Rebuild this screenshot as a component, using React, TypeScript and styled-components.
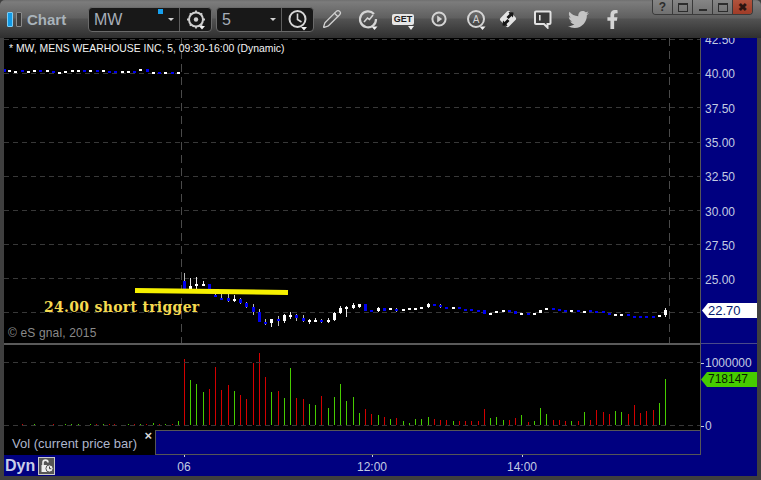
import React from "react";
import styled, { createGlobalStyle } from "styled-components";
import { FaFacebookF, FaTwitter } from "react-icons/fa";
import { Pencil } from "lucide-react";

const NAVY = "#000080";
const EDGE = "#565656";
const LABEL = "#c3cbe2";
const BAR_RED = "#d20000";
const BAR_GREEN = "#46cc00";

type Candle = [color: "w" | "b", bodyTop: number, bodyBottom: number, wickTop?: number, wickBottom?: number];

// values read off 3x crops, y = base + v / 3
const PRIOR_BASE = 55;
const prior: [number, Candle][] = [
  [12, ["b", 42, 50]], [28, ["w", 45, 50]], [46, ["w", 47, 53]], [67, ["b", 46, 52]], [85, ["w", 47, 53]],
  [103, ["w", 45, 50]], [121, ["b", 44, 50]], [142, ["w", 44, 50]], [160, ["b", 47, 53]], [178, ["w", 50, 55]],
  [196, ["w", 47, 53]], [217, ["w", 44, 50]], [235, ["w", 44, 50]], [253, ["b", 44, 50]], [271, ["w", 44, 50]],
  [292, ["b", 44, 50]], [310, ["w", 44, 50]], [328, ["b", 47, 53]], [346, ["b", 48, 53]], [367, ["w", 47, 53]],
  [385, ["w", 47, 53]], [403, ["b", 47, 53]], [421, ["w", 41, 47]], [442, ["b", 41, 51]], [460, ["w", 50, 56]],
  [478, ["b", 50, 56]], [496, ["w", 50, 56]], [517, ["b", 50, 56]], [535, ["w", 50, 56]],
];

const OPEN_BASE = 260;
const opening: Candle[] = [
  ["b", 63, 88, 39, 88], ["w", 78, 88, 55, 88], ["w", 72, 78, 50, 88], ["w", 72, 78, 63, 78], ["b", 72, 88],
  ["b", 104, 110, 100, 110], ["b", 113, 116, 103, 116], ["b", 114, 123, 100, 126], ["w", 116, 123, 105, 126],
  ["b", 118, 129, 113, 132], ["b", 129, 141, 126, 144], ["b", 141, 156, 132, 165], ["b", 156, 186, 147, 186],
  ["b", 186, 192, 177, 195], ["w", 177, 189, 177, 201], ["b", 177, 183, 168, 198], ["w", 165, 183, 162, 189],
  ["w", 165, 171, 156, 177], ["b", 165, 174, 162, 183], ["b", 174, 183, 165, 186], ["w", 180, 186, 177, 192],
  ["w", 180, 186, 174, 186], ["b", 180, 186, 177, 189], ["w", 180, 186, 174, 189], ["w", 159, 180, 156, 183],
  ["w", 144, 159, 138, 162], ["w", 141, 147, 138, 171],
];

const LATE_BASE = 285;
const afternoon: Candle[] = [
  ["w", 60, 68, 54, 72], ["w", 58, 66, 56, 68], ["b", 58, 78], ["b", 75, 81], ["w", 70, 78, 66, 81], ["b", 70, 78],
  ["w", 68, 75], ["b", 72, 78, 69, 81], ["w", 71, 78], ["w", 68, 75], ["w", 69, 75], ["w", 66, 72],
  ["w", 56, 66, 54, 69], ["b", 57, 63], ["b", 60, 66, 57, 69], ["b", 66, 72], ["w", 66, 72], ["b", 66, 72],
  ["b", 72, 78], ["b", 72, 78], ["b", 75, 81], ["b", 75, 87], ["w", 84, 90], ["w", 78, 84], ["w", 75, 81],
  ["b", 76, 81], ["b", 78, 87], ["w", 84, 90], ["b", 84, 90], ["w", 84, 90], ["w", 75, 84], ["w", 69, 75],
  ["b", 69, 75], ["b", 72, 78], ["b", 75, 81], ["w", 75, 81], ["b", 75, 81], ["w", 78, 84], ["b", 75, 81],
  ["b", 78, 84], ["b", 78, 84], ["b", 84, 90], ["w", 87, 93], ["w", 87, 93], ["b", 87, 93], ["b", 93, 99],
  ["b", 93, 99], ["b", 93, 99], ["b", 93, 99], ["w", 90, 96], ["w", 75, 90, 70, 96],
];

// top of each volume bar, 3x crop units (baseline 256)
const volumes: ["r" | "g", number][] = [
  ["r", 57], ["g", 120], ["g", 132], ["g", 155], ["r", 147], ["r", 81], ["r", 150], ["r", 135], ["g", 153], ["r", 165],
  ["r", 177], ["r", 68], ["r", 39], ["r", 111], ["g", 156], ["r", 153], ["g", 174], ["g", 84], ["r", 174], ["r", 177],
  ["g", 192], ["g", 195], ["r", 168], ["g", 204], ["g", 171], ["g", 132], ["g", 183], ["g", 171], ["g", 219], ["r", 207],
  ["r", 222], ["g", 225], ["r", 231], ["g", 237], ["r", 234], ["g", 243], ["g", 249], ["g", 237], ["g", 237], ["g", 231],
  ["r", 237], ["r", 240], ["r", 240], ["g", 243], ["r", 243], ["r", 243], ["r", 243], ["r", 243], ["r", 207], ["g", 234],
  ["g", 231], ["g", 240], ["r", 240], ["r", 234], ["g", 225], ["r", 246], ["g", 243], ["g", 204], ["g", 222], ["r", 240],
  ["r", 240], ["r", 243], ["g", 243], ["r", 243], ["g", 216], ["r", 240], ["r", 210], ["r", 216], ["r", 222], ["g", 213],
  ["g", 216], ["r", 222], ["r", 195], ["r", 219], ["r", 213], ["r", 210], ["g", 189], ["g", 117],
];

const priorVolumes: ["r" | "g", number][] = [
  ["r", 67], ["g", 103], ["r", 160], ["g", 196], ["g", 215], ["g", 235], ["g", 271], ["r", 290], ["g", 310],
  ["r", 328], ["r", 343], ["g", 385], ["r", 403], ["g", 421], ["r", 440], ["g", 460], ["r", 478], ["g", 497], ["r", 517], ["g", 535],
];

const gridY = [39, 73, 107, 142, 176, 210, 244, 278, 312];
const priceLabels = ["42.50", "40.00", "37.50", "35.00", "32.50", "30.00", "27.50", "25.00"];

const barX = (i: number) => Math.floor(184.3 + 6.25 * i);

const CandleMark = ({ x, base, candle }: { x: number; base: number; candle: Candle }) => {
  const [color, top, bottom, wickTop, wickBottom] = candle;
  const py = (v: number) => Math.round(base + v / 3);
  const fill = color === "w" ? "#ffffff" : "#0000f0";
  return (
    <g>
      {wickTop !== undefined && (
        <rect x={x} y={py(wickTop)} width={1} height={py(wickBottom ?? bottom) - py(wickTop)} fill={color === "w" ? "#e4e4e4" : "#b8b8b8"} />
      )}
      <rect x={x - 1} y={py(top)} width={3} height={Math.max(py(bottom) - py(top), 2)} fill={fill} />
    </g>
  );
};

const PriceChart = () => (
  <ChartSvg viewBox="4 38 696 305" width={696} height={305} shapeRendering="crispEdges">
    {gridY.map((y) => (
      <line key={y} x1={4} x2={700} y1={y + 0.5} y2={y + 0.5} stroke="#383838" strokeDasharray="5 4" />
    ))}
    <line x1={181.5} x2={181.5} y1={38} y2={343} stroke="#4a4a4a" strokeDasharray="8 5" />
    <line x1={669.5} x2={669.5} y1={38} y2={343} stroke="#4a4a4a" strokeDasharray="8 5" />
    {prior.map(([z, candle]) => (
      <CandleMark key={z} x={Math.floor(z / 3)} base={PRIOR_BASE} candle={candle} />
    ))}
    {opening.map((candle, i) => (
      <CandleMark key={i} x={barX(i)} base={OPEN_BASE} candle={candle} />
    ))}
    {afternoon.map((candle, i) => (
      <CandleMark key={i} x={barX(i + 27)} base={LATE_BASE} candle={candle} />
    ))}
    <line x1={135} y1={290.5} x2={288} y2={292.5} stroke="#f6f000" strokeWidth={5} shapeRendering="auto" />
  </ChartSvg>
);

const VolumeChart = () => (
  <ChartSvg viewBox="4 345 696 85" width={696} height={85} shapeRendering="crispEdges">
    {priorVolumes.map(([c, z], i) => {
      const tall = z === 535 ? 4 : z === 460 ? 2 : 1;
      return <rect key={i} x={Math.floor(z / 3)} y={425 - tall} width={1} height={tall} fill={c === "r" ? BAR_RED : BAR_GREEN} />;
    })}
    {volumes.map(([c, top], i) => {
      const y = Math.round(340 + top / 3);
      return <rect key={i} x={barX(i)} y={y} width={1} height={425 - y} fill={c === "r" ? BAR_RED : BAR_GREEN} />;
    })}
    <line x1={4} x2={700} y1={362.5} y2={362.5} stroke="#383838" strokeDasharray="5 4" />
    <line x1={4} x2={700} y1={425.5} y2={425.5} stroke="#383838" strokeDasharray="5 4" />
  </ChartSvg>
);

const Caret = ({ x, y }: { x: number; y: number }) => <path d={`M${x} ${y}h6l-3 3.5z`} fill="#f2f2f2" />;

const GearIcon = () => (
  <svg width="22" height="22" viewBox="0 0 22 22">
    <circle cx="11" cy="10.5" r="7" fill="none" stroke="#cfcfcf" strokeWidth="2" />
    <circle cx="11" cy="10.5" r="2.2" fill="#cfcfcf" />
    <path d="M11 1.5v2M11 17.5v2M2 10.5h2M18 10.5h2M4.8 4.3l1.4 1.4M15.8 15.3l1.4 1.4M17.2 4.3l-1.4 1.4M6.2 15.3l-1.4 1.4" stroke="#cfcfcf" strokeWidth="1.8" />
    <Caret x={14} y={17} />
  </svg>
);

const ClockIcon = () => (
  <svg width="24" height="24" viewBox="0 0 24 24">
    <circle cx="11.5" cy="11" r="8" fill="none" stroke="#d6d6d6" strokeWidth="2" />
    <path d="M11.5 5.5V11.5L15.5 14" fill="none" stroke="#d6d6d6" strokeWidth="1.6" />
    <Caret x={15} y={19} />
  </svg>
);

const GaugeIcon = () => (
  <svg width="24" height="24" viewBox="0 0 24 24">
    <path d="M18 7a8 8 0 1 0 2 5" fill="none" stroke="#d4d4d4" strokeWidth="2.2" />
    <path d="M8 15l3.5-4 2 1.5L17 8" fill="none" stroke="#d4d4d4" strokeWidth="1.6" />
    <Caret x={15.5} y={19.5} />
  </svg>
);

const PlayIcon = () => (
  <svg width="20" height="20" viewBox="0 0 20 20">
    <circle cx="10" cy="10" r="6.6" fill="none" stroke="#d4d4d4" strokeWidth="2" />
    <path d="M8.2 6.6l5 3.4-5 3.4z" fill="#d4d4d4" />
  </svg>
);

const AutoIcon = () => (
  <svg width="24" height="24" viewBox="0 0 24 24">
    <circle cx="12" cy="12" r="8" fill="none" stroke="#d4d4d4" strokeWidth="2" />
    <text x="12" y="15.5" textAnchor="middle" fontFamily="Liberation Sans, sans-serif" fontSize="10" fill="#d4d4d4">A</text>
    <Caret x={15.5} y={19.5} />
  </svg>
);

const SwapIcon = () => (
  <svg width="22" height="22" viewBox="0 0 22 22">
    <rect x="4.5" y="5" width="13" height="12" rx="2" transform="rotate(-45 11 11)" fill="#e4e4e4" />
    <path d="M11.5 4l5 .5-.5 5-1.5-1.5-3 3-2-2 3-3zM10.5 18l-5-.5.5-5 1.5 1.5 3-3 2 2-3 3z" fill="#161616" />
  </svg>
);

const ChatIcon = () => (
  <svg width="20" height="20" viewBox="0 0 20 20">
    <path d="M3 2.5h13.5a1 1 0 0 1 1 1V14a1 1 0 0 1-1 1h-2v3.5L11 15H3a1 1 0 0 1-1-1V3.5a1 1 0 0 1 1-1z" fill="#3a3a3a" stroke="#e2e2e2" strokeWidth="2" />
    <rect x="6" y="6" width="1.6" height="5.5" fill="#e2e2e2" />
  </svg>
);

const LockIcon = () => (
  <svg width="14" height="14" viewBox="0 0 14 14">
    <path d="M3 6V3.6a2.5 2.5 0 0 1 5 0" fill="none" stroke="#eee" strokeWidth="1.6" />
    <rect x="1.5" y="6" width="7" height="7" fill="#eee" />
    <circle cx="9.5" cy="9.5" r="3.6" fill="#eee" stroke="#555" />
    <path d="M9.5 7.5v2.2h1.8" fill="none" stroke="#444" />
  </svg>
);

const App = () => (
  <>
    <GlobalStyle />
    <Window>
      <Toolbar>
        <Brand>
          <BrandBar $active />
          <BrandBar />
          <BrandName>Chart</BrandName>
        </Brand>
        <FieldGroup $width={124}>
          <FieldValue>MW</FieldValue>
          <LinkDot />
          <FieldCaret />
          <FieldButton><GearIcon /></FieldButton>
        </FieldGroup>
        <FieldGroup $width={98}>
          <FieldValue>5</FieldValue>
          <FieldCaret />
          <FieldButton><ClockIcon /></FieldButton>
        </FieldGroup>
        <IconSlot $width={36}><Pencil size={20} color="#d0d0d0" strokeWidth={1.6} /></IconSlot>
        <IconSlot $width={36}><GaugeIcon /></IconSlot>
        <IconSlot $width={34}><GetBadge>GET</GetBadge></IconSlot>
        <IconSlot $width={37}><PlayIcon /></IconSlot>
        <IconSlot $width={37}><AutoIcon /></IconSlot>
        <IconSlot $width={28}><SwapIcon /></IconSlot>
        <IconSlot $width={42}><ChatIcon /></IconSlot>
        <IconSlot $width={28}><FaTwitter size={21} color="#c4c4c4" /></IconSlot>
        <IconSlot $width={40}><FaFacebookF size={19} color="#d4d4d4" /></IconSlot>
        <WindowControls>
          <ControlButton>?</ControlButton>
          <ControlButton><DockGlyph /></ControlButton>
          <ControlButton><MinGlyph /></ControlButton>
          <ControlButton><MaxGlyph /></ControlButton>
          <ControlButton $close>✖</ControlButton>
        </WindowControls>
      </Toolbar>
      <Body>
        <ChartColumn>
          <PricePane>
            <PriceChart />
            <StudyTitle>* MW, MENS WEARHOUSE INC, 5, 09:30-16:00 (Dynamic)</StudyTitle>
            <TriggerNote>24.00 short trigger</TriggerNote>
            <Copyright>© eS gnal, 2015</Copyright>
          </PricePane>
          <PaneRule />
          <VolumePane>
            <VolumeChart />
          </VolumePane>
          <LegendRow>
            <LegendLabel>
              Vol (current price bar)
              <LegendClose>×</LegendClose>
            </LegendLabel>
            <LegendFill />
          </LegendRow>
        </ChartColumn>
        <AxisColumn>
          <PriceAxis>
            {priceLabels.map((label) => (
              <PriceLabel key={label}>{label}</PriceLabel>
            ))}
            <LastPriceTag>22.70</LastPriceTag>
          </PriceAxis>
          <VolumeAxis>
            <VolumeLabel>1000000</VolumeLabel>
            <VolumeLabel>0</VolumeLabel>
            <LastVolumeTag>718147</LastVolumeTag>
          </VolumeAxis>
        </AxisColumn>
      </Body>
      <TimeAxis>
        <DynBlock>
          <DynText>Dyn</DynText>
          <LockBox><LockIcon /></LockBox>
        </DynBlock>
        <TimeLabel>06</TimeLabel>
        <span />
        <TimeLabel>12:00</TimeLabel>
        <span />
        <TimeLabel>14:00</TimeLabel>
      </TimeAxis>
    </Window>
  </>
);

export default App;

const GlobalStyle = createGlobalStyle`
  html, body {
    margin: 0;
    padding: 0;
    background: #000;
  }
  body {
    font-family: "Liberation Sans", Arial, sans-serif;
  }
`;

const Window = styled.div`
  width: 761px;
  height: 480px;
  box-sizing: border-box;
  padding: 0 4px 4px 4px;
  background: #3f3f3f;
  display: flex;
  flex-direction: column;
  overflow: hidden;
`;

const Toolbar = styled.div`
  position: relative;
  height: 38px;
  margin: 0 -4px;
  padding-left: 7px;
  flex: none;
  display: flex;
  align-items: center;
  border-radius: 5px 5px 0 0;
  background: linear-gradient(#6f6f6f 0, #7c7c7c 2px, #5f5f5f 18px, #525252 19px, #2f2f2f 38px);
`;

const Brand = styled.div`
  width: 81px;
  display: flex;
  align-items: center;
  gap: 3px;
`;

const BrandBar = styled.span<{ $active?: boolean }>`
  width: 4px;
  height: 13px;
  border: 1px solid ${({ $active }) => ($active ? "#7ccdf5" : "#8a8a8a")};
  border-radius: 1px;
  background: ${({ $active }) => ($active ? "#119ae6" : "#3a3a3a")};
`;

const BrandName = styled.span`
  margin-left: 2px;
  font-size: 15px;
  font-weight: 700;
  color: #a9b3ba;
`;

const FieldGroup = styled.div<{ $width: number }>`
  position: relative;
  width: ${({ $width }) => $width}px;
  height: 25px;
  margin-top: 1px;
  box-sizing: border-box;
  display: flex;
  align-items: center;
  padding-left: 5px;
  background: #181818;
  border: 1px solid #6a6a6a;
  border-radius: 4px;
  & + & {
    margin-left: 4px;
  }
`;

const FieldValue = styled.span`
  flex: 1;
  font-size: 16px;
  color: #a7aeb8;
`;

const LinkDot = styled.span`
  position: absolute;
  right: 48px;
  top: 1px;
  width: 5px;
  height: 5px;
  background: #17a0ee;
`;

const FieldCaret = styled.span`
  width: 0;
  height: 0;
  margin-right: 5px;
  border-left: 3px solid transparent;
  border-right: 3px solid transparent;
  border-top: 3px solid #d0d0d0;
`;

const FieldButton = styled.span`
  width: 31px;
  height: 100%;
  display: flex;
  align-items: center;
  justify-content: center;
  border-left: 1px solid #5e5e5e;
`;

const IconSlot = styled.div<{ $width: number }>`
  width: ${({ $width }) => $width}px;
  flex: none;
  display: flex;
  align-items: center;
  justify-content: center;
`;

const GetBadge = styled.span`
  position: relative;
  padding: 0 2px;
  height: 11px;
  line-height: 11px;
  border-radius: 2px;
  background: #e6e6e6;
  color: #222;
  font-size: 9px;
  font-weight: 700;
  &::after {
    content: "";
    position: absolute;
    right: 0;
    bottom: -5px;
    border-left: 3px solid transparent;
    border-right: 3px solid transparent;
    border-top: 4px solid #f0f0f0;
  }
`;

const WindowControls = styled.div`
  position: absolute;
  top: 0;
  left: 652px;
  width: 101px;
  height: 15px;
  display: flex;
  border: 1px solid #3a3a3a;
  border-top: 0;
  border-radius: 0 0 4px 4px;
  box-sizing: border-box;
  overflow: hidden;
`;

const ControlButton = styled.span<{ $close?: boolean }>`
  flex: 1;
  display: flex;
  align-items: center;
  justify-content: center;
  font-size: ${({ $close }) => ($close ? "11px" : "12px")};
  font-weight: 700;
  color: ${({ $close }) => ($close ? "#2a1410" : "#2c2c2c")};
  background: ${({ $close }) => ($close ? "linear-gradient(#b0533c, #a03c28)" : "linear-gradient(#858585, #707070)")};
  & + & {
    border-left: 1px solid #3a3a3a;
  }
`;

const DockGlyph = styled.span`
  width: 8px;
  height: 6px;
  border: 1px solid #2c2c2c;
  border-top-width: 2px;
`;

const MinGlyph = styled.span`
  width: 8px;
  height: 2px;
  margin-top: 6px;
  background: #2c2c2c;
`;

const MaxGlyph = styled.span`
  width: 8px;
  height: 6px;
  border: 1px solid #2c2c2c;
  border-top-width: 2px;
`;

const Body = styled.div`
  flex: none;
  height: 417px;
  display: flex;
`;

const ChartColumn = styled.div`
  width: 696px;
  display: flex;
  flex-direction: column;
  background: #000;
`;

const ChartSvg = styled.svg`
  display: block;
`;

const PricePane = styled.div`
  position: relative;
  height: 305px;
  flex: none;
  overflow: hidden;
`;

const StudyTitle = styled.div`
  position: absolute;
  left: 5px;
  top: 5px;
  font-size: 10.4px;
  color: #f4f4f4;
  white-space: nowrap;
`;

const TriggerNote = styled.div`
  position: absolute;
  left: 40px;
  top: 261px;
  font-family: "DejaVu Serif", serif;
  font-size: 14px;
  font-weight: 700;
  letter-spacing: 0.3px;
  color: #f6da50;
  white-space: nowrap;
`;

const Copyright = styled.div`
  position: absolute;
  left: 4px;
  top: 288px;
  font-size: 12px;
  letter-spacing: 0.15px;
  color: #8a8a8a;
  white-space: nowrap;
`;

const PaneRule = styled.div`
  height: 2px;
  flex: none;
  background: #5a5a5a;
`;

const VolumePane = styled.div`
  height: 85px;
  flex: none;
`;

const LegendRow = styled.div`
  height: 25px;
  flex: none;
  display: flex;
`;

const LegendLabel = styled.div`
  position: relative;
  width: 151px;
  box-sizing: border-box;
  padding: 6px 0 0 8px;
  font-size: 13px;
  color: #aeb6cc;
  white-space: nowrap;
`;

const LegendClose = styled.span`
  position: absolute;
  right: 3px;
  top: -2px;
  font-size: 13px;
  font-weight: 700;
  color: #d8d8d8;
`;

const LegendFill = styled.div`
  flex: 1;
  background: ${NAVY};
  border-top: 1px solid ${EDGE};
  border-left: 1px solid ${EDGE};
  border-bottom: 1px solid ${EDGE};
`;

const AxisColumn = styled.div`
  width: 57px;
  box-sizing: border-box;
  display: flex;
  flex-direction: column;
  background: ${NAVY};
  border-left: 1px solid ${EDGE};
`;

const PriceAxis = styled.div`
  position: relative;
  height: 306px;
  flex: none;
  overflow: hidden;
  border-bottom: 1px solid #4a4a8a;
  box-sizing: border-box;
`;

const PriceLabel = styled.div`
  height: 34.35px;
  line-height: 34.35px;
  padding-left: 4px;
  font-size: 12px;
  color: ${LABEL};
  &:first-child {
    margin-top: -15px;
  }
`;

const LastPriceTag = styled.div`
  position: absolute;
  left: 1px;
  right: 0;
  top: 265px;
  height: 15px;
  padding-left: 6px;
  line-height: 15px;
  font-size: 13px;
  color: #061a70;
  background: #fff;
  clip-path: polygon(0 50%, 6px 0, 100% 0, 100% 100%, 6px 100%);
`;

const VolumeAxis = styled.div`
  position: relative;
  flex: 1;
  padding-top: 12px;
  display: flex;
  flex-direction: column;
  gap: 49px;
`;

const VolumeLabel = styled.div`
  position: relative;
  height: 14px;
  line-height: 14px;
  padding-left: 4px;
  font-size: 12px;
  color: ${LABEL};
  &::before {
    content: "";
    position: absolute;
    left: 0;
    top: 7px;
    width: 3px;
    height: 1px;
    background: ${LABEL};
  }
`;

const LastVolumeTag = styled.div`
  position: absolute;
  left: 0;
  right: 0;
  top: 28px;
  height: 15px;
  padding-left: 7px;
  line-height: 15px;
  font-size: 12px;
  color: #0a1a00;
  background: ${BAR_GREEN};
  clip-path: polygon(0 50%, 6px 0, 100% 0, 100% 100%, 6px 100%);
`;

const TimeAxis = styled.div`
  height: 21px;
  flex: none;
  display: grid;
  grid-template-columns: 156px 48px 140px 48px 102px 48px;
  background: ${NAVY};
`;

const DynBlock = styled.div`
  display: flex;
  align-items: center;
  gap: 3px;
  padding-left: 1px;
`;

const DynText = styled.span`
  font-size: 16px;
  font-weight: 700;
  color: #c8cde8;
`;

const LockBox = styled.span`
  width: 15px;
  height: 16px;
  display: flex;
  align-items: center;
  justify-content: center;
  background: #555;
  border: 1px solid #c8c8c8;
`;

const TimeLabel = styled.span`
  position: relative;
  padding-top: 5px;
  text-align: center;
  font-size: 12px;
  color: ${LABEL};
  &::before {
    content: "";
    position: absolute;
    left: 50%;
    top: 0;
    width: 1px;
    height: 2px;
    background: ${LABEL};
  }
`;
